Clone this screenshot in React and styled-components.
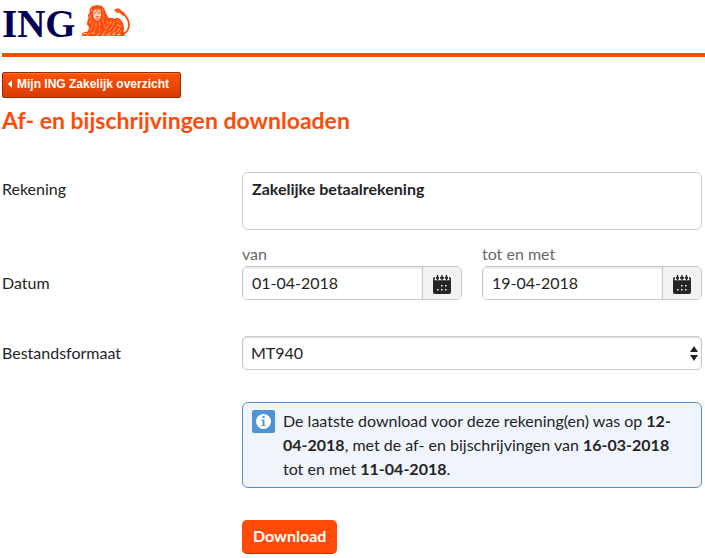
import React, { useState } from 'react';
import styled, { createGlobalStyle, ThemeProvider } from 'styled-components';

const theme = {
  orange: '#ff4b07',
  navy: '#000058',
  text: '#242424',
  muted: '#696969',
  border: '#c9c9c9',
  blue: '#4d93d6',
  font: "Lato, 'Open Sans', sans-serif",
};

const GlobalStyle = createGlobalStyle`
  * {
    box-sizing: border-box;
  }

  body {
    margin: 0;
    background: #fff;
    color: ${theme.text};
    font: 16px/24px ${theme.font};
  }
`;

const Header = styled.header`
  display: flex;
  align-items: flex-start;
  gap: 6px;
  height: 57px;
  margin-left: 2px;
  padding-top: 5px;
  border-bottom: 4px solid ${p => p.theme.orange};
`;

const BrandName = styled.span`
  color: ${p => p.theme.navy};
  font: bold 39px/38px 'Liberation Serif', serif;
`;

const Page = styled.main`
  padding: 15px 3px 4px 2px;
`;

const BackLink = styled.a`
  display: inline-flex;
  align-items: center;
  gap: 4px;
  height: 26px;
  padding: 0 11px 2px 5px;
  border: 1px solid #962c05;
  border-radius: 2px;
  background: linear-gradient(#ff5208, #d63c07);
  box-shadow: inset 0 1px #ff7a0c;
  color: #fff;
  font: bold 12px/16px 'Liberation Sans', sans-serif;
  text-decoration: none;
  vertical-align: top;
`;

const Title = styled.h1`
  margin: 8px 0 38px;
  color: ${p => p.theme.orange};
  font-size: 23px;
  font-weight: bold;
  line-height: 28px;
`;

const Row = styled.div`
  display: grid;
  grid-template-columns: minmax(0, 12fr) minmax(0, 23fr);
  align-items: ${p => p.$align || 'start'};
  margin-bottom: ${p => p.$space || '32px'};
`;

const Label = styled.label`
  padding: 5px 0;
`;

const GroupLabel = styled.span`
  padding: 5px 0;
`;

const AccountBox = styled.output`
  display: block;
  min-height: 58px;
  padding: 4px 9px;
  border: 1px solid ${p => p.theme.border};
  border-radius: 6px;
  font-weight: bold;
`;

const Dates = styled.div`
  display: grid;
  grid-template-columns: repeat(2, minmax(0, 1fr));
  gap: 20px;
`;

const DateLabel = styled.label`
  display: block;
  color: ${p => p.theme.muted};
`;

const DateControl = styled.div`
  display: flex;
  height: 34px;
  border: 1px solid ${p => p.theme.border};
  border-radius: 5px;
  overflow: hidden;
`;

const DateInput = styled.input`
  flex: 1;
  min-width: 0;
  padding: 0 9px;
  border: 0;
  box-shadow: inset 0 1px 2px #ddd;
  background: #fff;
  color: inherit;
  font: inherit;
`;

const CalendarButton = styled.button`
  display: flex;
  align-items: center;
  justify-content: center;
  width: 39px;
  padding: 3px 0 0;
  border: 0;
  border-left: 1px solid ${p => p.theme.border};
  background: #f2f2f2;
  color: ${p => p.theme.text};
`;

const SelectWrapper = styled.div`
  display: grid;
  align-items: center;

  > * {
    grid-area: 1 / 1;
  }

  svg {
    justify-self: end;
    margin-right: 4px;
    pointer-events: none;
  }
`;

const Select = styled.select`
  width: 100%;
  height: 34px;
  padding: 0 20px 0 8px;
  border: 1px solid ${p => p.theme.border};
  border-radius: 5px;
  box-shadow: inset 0 1px 2px #ddd;
  appearance: none;
  background: #fff;
  color: inherit;
  font: inherit;
`;

const Notice = styled.div`
  grid-column: 2;
  display: flex;
  gap: 8px;
  padding: 6px 9px;
  border: 1px solid ${p => p.theme.blue};
  border-radius: 6px;
  background: #f0f5fc;

  svg {
    flex: none;
    margin-top: 1px;
  }

  p {
    margin: 0;
  }
`;

const DownloadButton = styled.button`
  grid-column: 2;
  justify-self: start;
  height: 34px;
  padding: 0 11px 2px;
  border: 0;
  border-bottom: 1px solid #c93a04;
  border-radius: 5px;
  background: ${p => p.theme.orange};
  color: #fff;
  font: inherit;
  font-weight: bold;
`;

const Lion = () => (
  <svg width="49" height="32" viewBox="0 0 49 32" aria-hidden="true">
    <g fill={theme.orange}>
      <path d="M9 2 11 1 13 .5 15 0 17 .5 19 .5 21 2 22.5 4 23.5 7 25 10 26.5 13 31 13 33 14 35 12.5 38 14 41 18 42 23 41.5 27 43 29 42 31H0V28.5L2 27 6 26.5 7 22 5 19.5 5.5 15.5 6.5 13 6 10 7.5 8 7.5 5Z" />
      <path d="M32 5 34 3.5 37 3.5 39.5 5.5 42 8 43.5 11 40.5 10.5 38 8 34.5 7.5Z" />
    </g>
    <path d="M40.5 7.5C45 12 47.3 16 47 20.5 46.6 25.5 43.5 29 38.5 30" fill="none" stroke={theme.orange} strokeWidth="1.8" />
    <path d="M11 6.5 12.5 4.5 15 4 17.5 4.5 19 6.5 19 10.5 18 13.5 16 15.5 14 15.5 12 13.5 11 10Z" fill="#fff" opacity=".75" />
    <g fill="none" stroke={theme.orange} strokeLinecap="round">
      <path d="M11.8 8H14M16.2 8H18.4M14.2 11.5H16.2M13.3 14Q15 12.8 17 14M15 4.5V6.5" strokeWidth="1" />
    </g>
    <g fill="none" stroke="#fff" strokeLinecap="round" opacity=".8">
      <path d="M9.5 4.5 9 7M8.7 10 8 13M9.5 14 8 18M11.5 17 10.5 21M14 18 14 22M17.5 17 17.5 21M20.5 14 21.5 18M20.8 9 22 12M20 4 21 6M9.5 22.5 8.5 25.5M13 24 12 27M18 23 17 26M22 20 23.5 23" strokeWidth=".5" />
      <path d="M25 16 26 19M29 16 28 19M32 17 31 20M35 16 38 18M35 20 39 21M26 21 24 24M30 22 27 25M34 22 31 26M38 23 35 27M24 26 21 28M29 27 26 29M33 27 30 29M39 26 37 29" strokeWidth=".65" />
      <path d="M1.5 28.8 4.5 28.5M5 30.5 7 28.5M10 28 12 28M15 30.5 17.5 28M20 30.5 22.5 29M24.5 30.2H28M31 30 33 29M35.5 29.5H38" strokeWidth="1" />
      <path d="M34 5 38 6.5" strokeWidth=".5" />
    </g>
  </svg>
);

const CalendarIcon = () => (
  <svg width="18" height="19" viewBox="0 0 18 19" aria-hidden="true">
    <path d="M2 2H16Q18 2 18 4V17Q18 19 16 19H2Q0 19 0 17V4Q0 2 2 2Z" fill="currentColor" />
    <path d="M1.5 4.5H16.5" stroke="#f2f2f2" strokeWidth="1.6" />
    <path d="M2.5 1V4M6.5 1V4M11.5 1V4M15.5 1V4" stroke="#f2f2f2" strokeWidth="1" />
    <path d="M4.5 0V5M9 0V5M13.5 0V5" stroke="currentColor" strokeWidth="1.4" />
    <path d="M8 10h1.5v1.5H8zm4 0h1.5v1.5H12zM4 14h1.5v1.5H4zm4 0h1.5v1.5H8zm4 0h1.5v1.5H12z" fill="#f2f2f2" />
  </svg>
);

const InfoIcon = () => (
  <svg width="23" height="23" viewBox="0 0 23 23" aria-hidden="true">
    <rect width="23" height="23" rx="2" fill={theme.blue} />
    <circle cx="11.5" cy="11.5" r="7.5" fill="#fff" />
    <path d="M10.5 6h2v2h-2zM9.5 9.5h3V15h1v1h-4v-1h1v-4.5h-1z" fill={theme.blue} />
  </svg>
);

const DateField = ({ id, label, initialValue }) => {
  const [value, setValue] = useState(initialValue);

  return (
    <div>
      <DateLabel htmlFor={id}>{label}</DateLabel>
      <DateControl>
        <DateInput id={id} value={value} onChange={e => setValue(e.target.value)} />
        <CalendarButton type="button" aria-labelledby={id}>
          <CalendarIcon />
        </CalendarButton>
      </DateControl>
    </div>
  );
};

const App = () => (
  <ThemeProvider theme={theme}>
    <GlobalStyle />
    <Header>
      <BrandName>ING</BrandName>
      <Lion />
    </Header>
    <Page>
      <BackLink href="#overzicht">
        <svg width="5" height="8" viewBox="0 0 5 8" aria-hidden="true">
          <path d="M4 0V8L0 4Z" fill="#fff" />
        </svg>
        Mijn ING Zakelijk overzicht
      </BackLink>
      <Title>Af- en bijschrijvingen downloaden</Title>
      <form onSubmit={e => e.preventDefault()}>
        <Row $space="12px">
          <Label htmlFor="rekening">Rekening</Label>
          <AccountBox id="rekening">Zakelijke betaalrekening</AccountBox>
        </Row>
        <Row $space="36px" $align="end">
          <GroupLabel id="datum">Datum</GroupLabel>
          <Dates role="group" aria-labelledby="datum">
            <DateField id="van" label="van" initialValue="01-04-2018" />
            <DateField id="tot" label="tot en met" initialValue="19-04-2018" />
          </Dates>
        </Row>
        <Row>
          <Label htmlFor="formaat">Bestandsformaat</Label>
          <SelectWrapper>
            <Select id="formaat">
              <option>MT940</option>
            </Select>
            <svg width="8" height="15" viewBox="0 0 8 15" aria-hidden="true">
              <path d="M4 0 8 6H0ZM0 9H8L4 15Z" fill={theme.text} />
            </svg>
          </SelectWrapper>
        </Row>
        <Row>
          <Notice>
            <InfoIcon />
            <p>
              De laatste download voor deze rekening(en) was op <b>12-04-2018</b>, met de af- en
              bijschrijvingen van <b>16-03-2018</b> tot en met <b>11-04-2018</b>.
            </p>
          </Notice>
        </Row>
        <Row $space="0">
          <DownloadButton type="submit">Download</DownloadButton>
        </Row>
      </form>
    </Page>
  </ThemeProvider>
);

export default App;
